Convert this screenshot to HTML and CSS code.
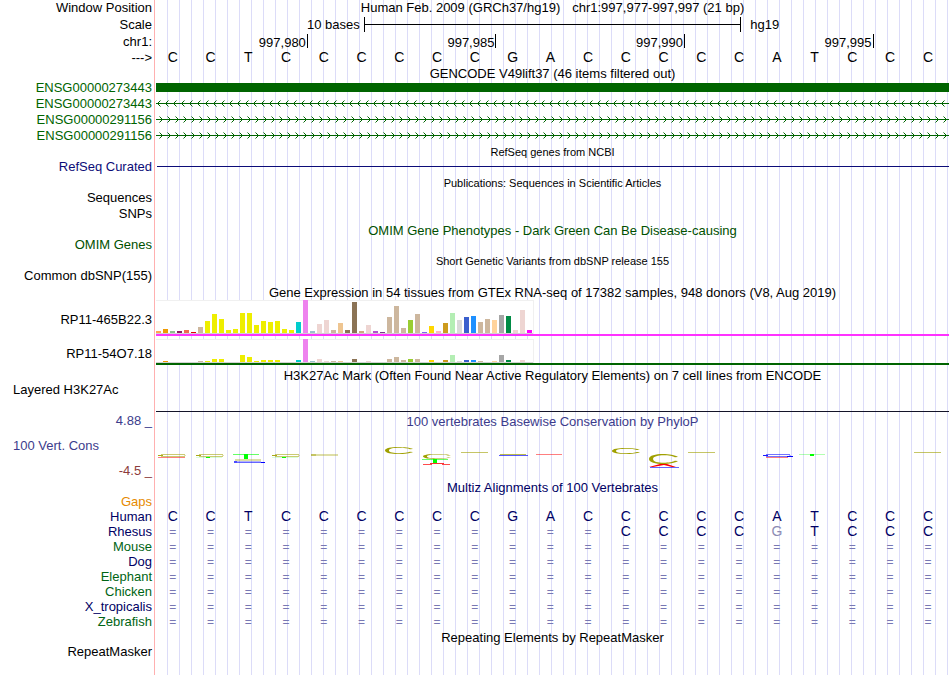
FILE: index.html
```html
<!DOCTYPE html>
<html lang="en">
<head>
<meta charset="utf-8">
<title>Human chr1:997,977-997,997</title>
<link rel="stylesheet" href="styles.css">
</head>
<body>
<main class="browser">
  <div class="row"><span class="label">Window Position</span><h1 class="title position"><span>Human Feb. 2009 (GRCh37/hg19)</span><span>chr1:997,977-997,997 (21 bp)</span></h1></div>
  <div class="row scale-row"><span class="label">Scale</span>
    <div class="track scale"><span class="scale-size">10 bases</span><span class="scale-bar"></span><span class="scale-db">hg19</span></div>
  </div>
  <div class="row"><span class="label">chr1:</span>
    <div class="track ruler"><span>997,980</span><span>997,985</span><span>997,990</span><span>997,995</span></div>
  </div>
  <table class="bases reference">
    <tbody id="bases"></tbody>
  </table>

  <div class="row title-row tight"><span class="label"></span><h2 class="title">GENCODE V49lift37 (46 items filtered out)</h2></div>
  <div class="row"><span class="label green">ENSG00000273443</span><div class="track"><div class="exon"></div></div></div>
  <div class="row"><span class="label green">ENSG00000273443</span><div class="track"><svg class="intron" aria-hidden="true">
    <defs><pattern id="minus" width="8" height="7" patternUnits="userSpaceOnUse"><path d="M4.5 .5L1.5 3.5L4.5 6.5"/></pattern></defs>
    <rect class="strand-line" y="3" width="100%" height="1"/><rect width="100%" height="7" fill="url(#minus)"/></svg></div></div>
  <div class="row"><span class="label green">ENSG00000291156</span><div class="track"><svg class="intron" aria-hidden="true">
    <defs><pattern id="plus" width="8" height="7" patternUnits="userSpaceOnUse"><path d="M3.5 .5L6.5 3.5L3.5 6.5"/></pattern></defs>
    <rect class="strand-line" y="3" width="100%" height="1"/><rect width="100%" height="7" fill="url(#plus)"/></svg></div></div>
  <div class="row"><span class="label green">ENSG00000291156</span><div class="track"><svg class="intron" aria-hidden="true">
    <rect class="strand-line" y="3" width="100%" height="1"/><rect width="100%" height="7" fill="url(#plus)"/></svg></div></div>

  <div class="row title-row"><span class="label"></span><h2 class="title small">RefSeq genes from NCBI</h2></div>
  <div class="row"><span class="label navy">RefSeq Curated</span><div class="track"><div class="refseq-line"></div></div></div>

  <div class="row title-row"><span class="label"></span><h2 class="title small">Publications: Sequences in Scientific Articles</h2></div>
  <div class="row"><span class="label">Sequences</span></div>
  <div class="row"><span class="label">SNPs</span></div>

  <div class="row title-row"><span class="label"></span><h2 class="title omim">OMIM Gene Phenotypes - Dark Green Can Be Disease-causing</h2></div>
  <div class="row"><span class="label omim">OMIM Genes</span></div>

  <div class="row title-row"><span class="label"></span><h2 class="title small">Short Genetic Variants from dbSNP release 155</h2></div>
  <div class="row"><span class="label">Common dbSNP(155)</span></div>

  <div class="row"><span class="label"></span><h2 class="title">Gene Expression in 54 tissues from GTEx RNA-seq of 17382 samples, 948 donors (V8, Aug 2019)</h2></div>
  <div class="row gtex-row coding"><span class="label">RP11-465B22.3</span><div class="track"><div class="gtex" id="gtex-465"></div></div></div>
  <div class="row gtex-row second"><span class="label">RP11-54O7.18</span><div class="track"><div class="gtex" id="gtex-54"></div></div></div>

  <div class="row title-row mark"><span class="label"></span><h2 class="title">H3K27Ac Mark (Often Found Near Active Regulatory Elements) on 7 cell lines from ENCODE</h2></div>
  <div class="row h3k-row"><span class="label start">Layered H3K27Ac</span><div class="track"></div></div>

  <div class="row cons-title"><span class="label cons">4.88 _</span><h2 class="title cons">100 vertebrates Basewise Conservation by PhyloP</h2></div>
  <div class="row cons-row">
    <div class="cons-labels"><span class="label cons start">100 Vert. Cons</span><span class="label low">-4.5 _</span></div>
    <div class="track"><svg class="logo" id="logo" viewBox="156 430 793 50" preserveAspectRatio="none" aria-hidden="true"></svg></div>
  </div>

  <div class="row title-row tight"><span class="label"></span><h2 class="title align">Multiz Alignments of 100 Vertebrates</h2></div>
  <div class="row tight"><span class="label gaps">Gaps</span></div>
  <table class="bases alignment">
    <tbody id="alignment"></tbody>
  </table>
  <div class="row title-row"><span class="label"></span><h2 class="title">Repeating Elements by RepeatMasker</h2></div>
  <div class="row tight"><span class="label">RepeatMasker</span></div>
</main>
<script src="tracks.js"></script>
</body>
</html>
```
FILE: styles.css
```css
* { box-sizing: border-box; }

body {
  margin: 0;
  background: #fff;
  color: #000;
  font: 13px/16px "Liberation Sans", Arial, sans-serif;
}

.browser {
  position: relative;
  isolation: isolate;
  min-height: 100vh;
  padding-right: 1px;
}

/* Guide lines behind every track */
.browser::before {
  content: "";
  position: absolute;
  z-index: -1;
  inset: 0 1px 0 154px;
  border-left: 1px solid #ffb0b0;
  background: repeating-linear-gradient(to right, #dcdcf8 0 1px, transparent 1px 12px) 12px 0 no-repeat;
}

.row { display: flex; height: 16px; line-height: 16px; }
.tight, .title-row { height: 15px; line-height: 15px; }
.title-row.tight { height: 14px; line-height: 14px; }
.scale-row { height: 18px; line-height: 18px; }

.label {
  flex: none;
  width: 154px;
  padding-right: 2px;
  text-align: right;
  white-space: nowrap;
}
.label.start { text-align: left; padding-left: 13px; }

.track { flex: 1; min-width: 0; margin-left: 2px; }

.title {
  flex: 1;
  margin: 0 0 0 2px;
  padding-top: 1px;
  font-size: 13px;
  font-weight: normal;
  line-height: inherit;
  text-align: center;
  white-space: nowrap;
}
.title.small { font-size: 11px; }
.position { display: flex; justify-content: center; gap: 12px; line-height: 14px; }

.green { color: #006400; }
.navy { color: #0c0c78; }
.omim { color: #005000; }
.cons { color: #3c3c8c; }
.low { color: #8c3c3c; }
.align { color: #000064; }
.gaps { color: #e68a00; }

/* Scale and ruler */
.scale { display: grid; grid-template-columns: 11fr 20fr 11fr; }
.scale-size { padding-right: 4px; text-align: right; }
.scale-db { padding-left: 9px; }
.scale-bar {
  height: 15px;
  margin-top: 1px;
  border: solid #000;
  border-width: 0 1px;
  background: linear-gradient(#000, #000) 0 7px / 100% 1px no-repeat;
}

.ruler { display: grid; grid-template-columns: 4fr 5fr 5fr 5fr 2fr; padding-left: 1px; }
.ruler span { height: 14px; padding-right: 1px; border-right: 1px solid #000; text-align: right; line-height: 18px; }

/* Per-base letters */
.bases {
  width: calc(100% - 2px);
  table-layout: fixed;
  border-spacing: 0;
}
.bases th, .bases td { height: 16px; padding: 0; line-height: 16px; }
.bases th { width: 154px; padding-right: 2px; font-weight: normal; text-align: right; }
.bases td { font-size: 14px; text-align: center; }
.reference td { padding-bottom: 2px; line-height: 14px; }
.alignment th, .alignment td { height: 15px; line-height: 15px; color: #000064; }
.alignment th.far { color: #006414; }
.alignment td.gap { padding-top: 2px; color: #7878b4; font-size: 12px; line-height: 13px; }
.alignment td.diff { color: #8c8cb4; }

/* Genes */
.exon { height: 9px; margin-top: 3px; background: #006400; }
.intron { display: block; width: 100%; height: 7px; margin-top: 4px; }
.intron path { fill: none; stroke: #006400; }
.strand-line { fill: #006400; }
.refseq-line { height: 1px; margin: 7px 0 0 1px; background: #0c0c78; }

/* Expression */
.gtex-row { height: 36px; line-height: 40px; }
.gtex-row .track { border-bottom: 2px solid #ff32ff; }
.gtex {
  display: flex;
  align-items: flex-end;
  gap: 2px;
  width: 378px;
  height: 100%;
  padding-bottom: 1px;
  background: linear-gradient(#d2d2d2, #d2d2d2) 0 100% / 100% 1px no-repeat, #fff;
  box-shadow: inset 0 1px #f0f0f0, inset -1px 0 #f0f0f0;
}
.gtex i { flex: none; width: 5px; }
.gtex-row.second { height: 26px; margin-top: 3px; line-height: 30px; }
.gtex-row.second .track { border-color: #006400; }

.mark { margin-top: 3px; }
.mark .title { padding-top: 0; }
.h3k-row { height: 29px; line-height: 14px; }
.h3k-row .track { border-bottom: 1px solid #141428; }

/* Conservation */
.cons-title { height: 18px; line-height: 18px; }
.cons-row { height: 50px; }
.cons-labels { display: flex; flex: none; flex-direction: column; width: 154px; line-height: 18px; }
.cons-labels .start { height: 32px; line-height: 32px; }
.logo { display: block; width: 100%; height: 50px; }
```
FILE: tracks.js
```js
const sequence = "CCTCCCCCCGACCCCCATCCC";

function addBases(body, name, bases, far) {
  const row = body.insertRow();
  const head = document.createElement("th");
  head.scope = "row";
  head.textContent = name;
  if (far) head.className = "far";
  row.append(head);
  for (const base of bases) {
    const cell = row.insertCell();
    cell.textContent = base.toUpperCase();
    if (base === "=") cell.className = "gap";
    if (base === "g") cell.className = "diff";
  }
}

addBases(document.getElementById("bases"), "--->", sequence);

const none = "=".repeat(21);
const alignment = document.getElementById("alignment");
addBases(alignment, "Human", sequence);
addBases(alignment, "Rhesus", "=".repeat(12) + "CCCCgTCCC");
addBases(alignment, "Mouse", none, true);
addBases(alignment, "Dog", none);
addBases(alignment, "Elephant", none, true);
addBases(alignment, "Chicken", none, true);
addBases(alignment, "X_tropicalis", none);
addBases(alignment, "Zebrafish", none, true);

// One colour per GTEx tissue, in display order
const yellow = "#eeee00", tan = "#cdb79e", rose = "#eed5d2";
const tissues = [
  "#ffa54f", "#ee9a00", "#8fbc8f", "#8b1c62", "#ee6a50", "#e00000", tan,
  ...Array(13).fill(yellow), "#00cdcd", "#ee82ee", "#9ac0cd", rose, rose,
  tan, "#eec591", "#8b7355", "#8b7355", "#cdaa7d", rose, "#b452cd", "#7a378b",
  tan, tan, tan, "#9acd32", tan, "#7a67ee", "#ffd700", "#ffb6c1", "#cd9b1d",
  "#b4eeb4", "#d9d9d9", "#3a5fcd", "#1e90ff", tan, tan, "#ffd39b", "#a6a6a6",
  "#008b45", rose, rose, "#ff00ff"
];

function addBars(id, heights) {
  const chart = document.getElementById(id);
  heights.forEach((height, i) => {
    const bar = document.createElement("i");
    bar.style.height = height + "px";
    bar.style.background = tissues[i];
    chart.append(bar);
  });
}

addBars("gtex-465", [2, 4, 2, 2, 3, 1, 6, 12, 19, 14, 3, 4, 20, 20, 8, 12, 11, 12,
  4, 3, 11, 33, 2, 9, 13, 3, 10, 3, 31, 2, 8, 2, 1, 16, 27, 5, 13, 19, 1, 7, 2, 10,
  20, 13, 16, 17, 11, 14, 13, 18, 17, 3, 23, 3]);
addBars("gtex-54", [0, 1, 0, 0, 0, 0, 1, 1, 3, 3, 0, 0, 7, 5, 1, 2, 2, 2,
  0, 0, 2, 23, 1, 3, 1, 1, 1, 0, 3, 0, 1, 0, 0, 3, 5, 2, 3, 3, 0, 2, 0, 2,
  7, 1, 2, 2, 1, 0, 1, 7, 2, 0, 2, 0]);

const olive = "#a0a000", green = "#00ff00", blue = "#0000ff", red = "#ff0000";
const logo = document.getElementById("logo");

function shape(d, fill, opacity = 1) {
  const path = document.createElementNS("http://www.w3.org/2000/svg", "path");
  path.setAttribute("d", d);
  path.setAttribute("fill", fill);
  path.setAttribute("opacity", opacity);
  logo.append(path);
}

function bar(x, y, w, h, fill, opacity) {
  shape(`M${x} ${y}h${w}v${h}h${-w}z`, fill, opacity);
}

function ring(x, y, w, h, fill, opacity) {
  const X = f => x + f * w;
  const Y = f => y + f * h;
  shape(`M${X(1)} ${Y(.3)}C${X(.8)} ${Y(-.1)} ${X(0)} ${Y(-.15)} ${X(0)} ${Y(.5)}` +
    `C${X(0)} ${Y(1.15)} ${X(.8)} ${Y(1.1)} ${X(1)} ${Y(.7)}L${X(.89)} ${Y(.68)}` +
    `C${X(.75)} ${Y(.95)} ${X(.14)} ${Y(1)} ${X(.14)} ${Y(.5)}` +
    `C${X(.14)} ${Y(0)} ${X(.75)} ${Y(.05)} ${X(.89)} ${Y(.32)}Z`, fill, opacity);
}

function flatRing(x, fill) {
  bar(x + 3, 454, 24, 1, fill, .55);
  bar(x, 455, 5, 1, fill, .9);
  bar(x + 26, 455, 2, 1, fill, .3);
  bar(x + 3, 456, 24, 1, fill, .55);
}

flatRing(158, olive);
bar(158, 457, 27, 1, red, .5);
flatRing(196, olive);
bar(196, 457, 26, 1, green, .15);
bar(206, 457, 4, 1, green);
bar(233, 454, 26, 1, green, .6);
bar(244, 454, 4, 5, green);
bar(235, 459, 26, 2, olive, .35);
bar(234, 461, 3, 2, blue, .7);
bar(237, 461, 24, 1, blue, .3);
bar(237, 462, 24, 1, blue, .6);
bar(261, 462, 4, 1, blue);
flatRing(272, olive);
bar(272, 457, 26, 1, green, .15);
bar(282, 457, 4, 1, green);
bar(311, 454, 27, 2, olive, .35);
bar(311, 454, 5, 2, olive, .4);
ring(385, 447, 28, 7, olive);
ring(423, 454, 28, 5, olive);
bar(422, 459, 26, 1, green, .6);
bar(433, 459, 4, 4, green);
bar(430, 463, 14, 1, red, .8);
bar(423, 464, 9, 1, red, .7);
bar(442, 464, 8, 1, red, .7);
bar(461, 452, 27, 1, olive, .6);
bar(500, 454, 26, 1, olive, .7);
bar(499, 455, 29, 1, blue, .65);
bar(536, 454, 26, 1, red, .5);
ring(612, 448, 28, 6, olive);
ring(649, 454, 29, 10, olive);
shape("M649 467L660 464H667L676 467H672L664 465L653 467Z", red);
bar(650, 467, 29, 1, blue, .6);
bar(688, 452, 27, 1, olive, .6);
flatRing(763, blue);
bar(787, 456, 6, 1, blue);
bar(766, 457, 22, 1, red, .5);
bar(799, 454, 26, 1, green, .3);
bar(810, 454, 4, 2, green);
bar(914, 452, 27, 1, olive, .6);
```
